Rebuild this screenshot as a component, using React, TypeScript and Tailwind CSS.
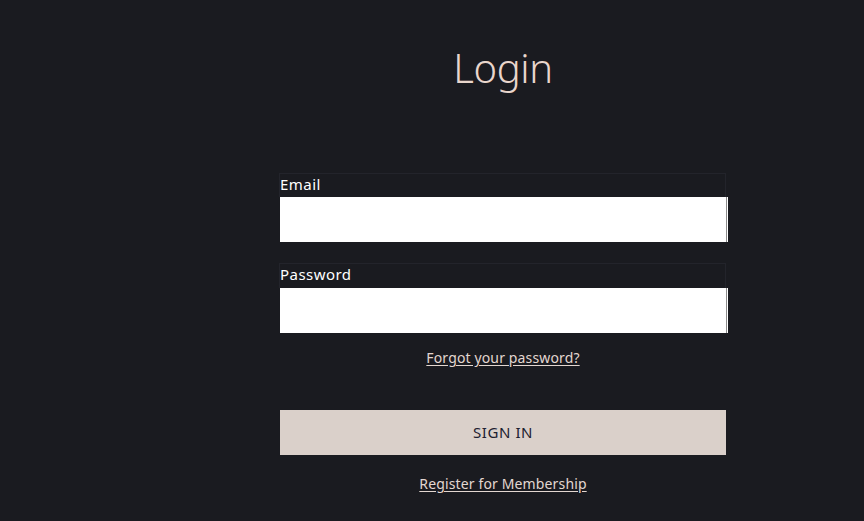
import React from "react";

export default function App() {
  const font = { fontFamily: '"Noto Sans", "Open Sans", sans-serif' };
  return (
    <div className="min-h-[521px] w-full bg-[#1a1b20] pl-[142px] flex justify-center" style={font}>
      <div className="w-[448px] flex flex-col">
        <h1 className="mt-[38px] text-center text-[40px] leading-[60px] font-light tracking-[-0.01em] text-[#e9d6cc]">Login</h1>
        <div className="mt-[75px] flex flex-col">
          <div className="h-[24px] border border-[#23242b] border-b-0 w-[447px] text-[15px] leading-[20px] tracking-[0.03em] text-white">Email</div>
          <div className="h-[45px] bg-white w-[448px] ml-px shadow-[inset_-1px_0_0_#ffffff,inset_-2px_0_0_#8a8a8a]" />
        </div>
        <div className="mt-[21px] flex flex-col">
          <div className="h-[25px] border border-[#23242b] border-b-0 w-[447px] text-[15px] leading-[21px] tracking-[0.03em] text-white">Password</div>
          <div className="h-[45px] bg-white w-[448px] ml-px shadow-[inset_-1px_0_0_#ffffff,inset_-2px_0_0_#8a8a8a]" />
        </div>
        <div className="mt-[12px] text-center">
          <a className="text-[14px] leading-[20px] tracking-[0.01em] text-[#e3d7d1] underline underline-offset-2">Forgot your password?</a>
        </div>
        <button className="mt-[41px] ml-px w-[446px] h-[45px] bg-[#dad0ca] text-[#1d2130] text-[15px] tracking-[0.04em]">SIGN IN</button>
        <div className="mt-[16px] text-center">
          <a className="text-[14px] leading-[20px] tracking-[0.01em] text-[#e3d7d1] underline underline-offset-2">Register for Membership</a>
        </div>
      </div>
    </div>
  );
}
